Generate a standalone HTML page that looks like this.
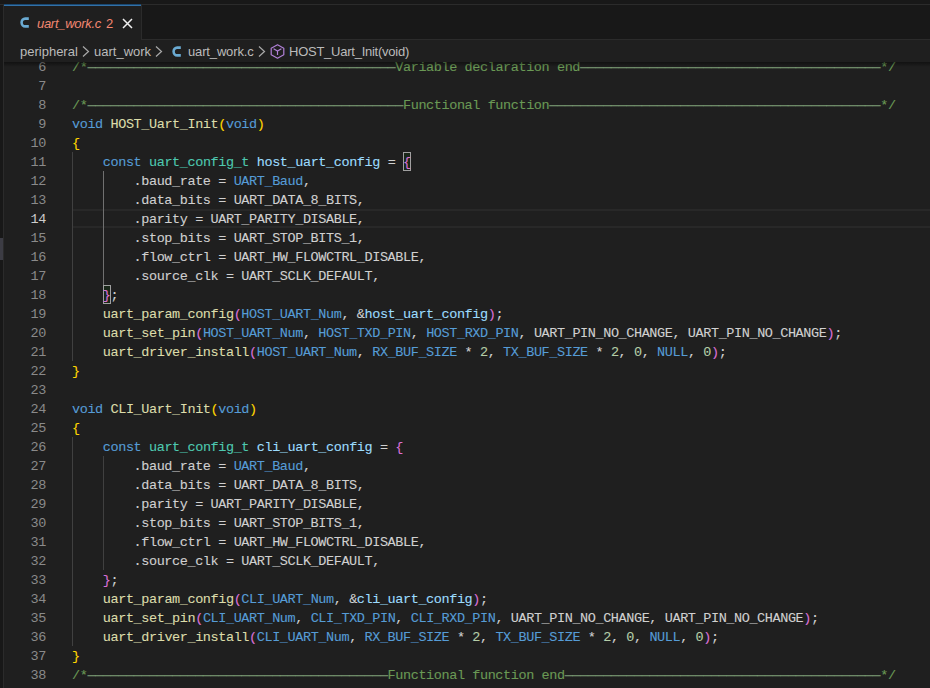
<!DOCTYPE html>
<html><head><meta charset="utf-8">
<style>
html,body{margin:0;padding:0;}
body{width:930px;height:688px;overflow:hidden;background:#181818;position:relative;font-family:"Liberation Sans",sans-serif;}
.abs{position:absolute;}
#topline{left:0;top:4px;width:930px;height:1px;background:#2B2B2B;}
#leftbar{left:0;top:5px;width:3px;height:683px;background:#181818;}
#leftborder{left:3px;top:5px;width:1px;height:683px;background:#2B2B2B;}
#slider{left:0;top:238px;width:3px;height:22px;background:#3C3C44;}
#tabbar{left:4px;top:5px;width:926px;height:34px;background:#181818;border-bottom:1px solid #2B2B2B;}
#tab{left:4px;top:4px;width:137px;height:36px;background:#1F1F1F;border-right:1px solid #2B2B2B;}
#tabtop{left:4px;top:4px;width:137px;height:2px;background:linear-gradient(#0D3355,#3F86C2);}
#editor{left:4px;top:40px;width:926px;height:648px;background:#1F1F1F;overflow:hidden;}
#crumbs{left:4px;top:40px;width:926px;height:22px;background:#1F1F1F;z-index:5;}
#shadow{left:4px;top:62px;width:926px;height:5px;z-index:4;background:linear-gradient(#00000070,#00000000);}
.ui{position:absolute;white-space:pre;font-size:13px;line-height:16px;color:#BBBBBB;}
#lines{left:0px;top:17px;width:926px;height:700px;}
.ln{position:absolute;left:68px;height:19px;line-height:19px;white-space:pre;font-family:"Liberation Mono",monospace;font-size:13.5px;letter-spacing:-0.404px;color:#D0D0D0;padding-top:1px;-webkit-text-stroke:0.1px;}
.nm{position:absolute;left:0;width:42px;text-align:right;height:19px;line-height:19px;font-family:"Liberation Mono",monospace;font-size:13.5px;letter-spacing:-0.404px;color:#8A8A8A;padding-top:1px;}
.nm.act{color:#CCCCCC;}
.k{color:#569CD6}.f{color:#DCDCAA}.t{color:#4EC9B0}.v{color:#9CDCFE}.m{color:#569CD6}.n{color:#B5CEA8}.c{color:#6A9955}
.b1{color:#FFD700}.b2{color:#DA70D6}.b3{color:#179FFF}
.hl{position:relative;top:1px;color:#7FA278;-webkit-text-stroke:0}
.bm{position:absolute;width:6px;height:17px;border:1px solid #A0A0A0;background:#00640022;}
.guide{position:absolute;width:1px;background:#404040;}
.guide.act{background:#707070;}
#curline{left:68px;top:152px;width:858px;height:15px;border-top:2px solid #282828;border-bottom:2px solid #282828;}
</style></head><body>
<div class="abs" id="tabbar"></div>
<div class="abs" id="topline"></div>
<div class="abs" id="leftbar"></div>
<div class="abs" id="leftborder"></div>
<div class="abs" id="slider"></div>
<div class="abs" id="editor">
  <div class="abs" id="lines">
    <div class="abs" id="curline"></div>
    <div class="bm" style="left:399px;top:95px"></div>
    <div class="bm" style="left:99px;top:228px"></div>
    <div class="guide" style="left:68px;top:95px;height:209px"></div>
    <div class="guide act" style="left:99px;top:114px;height:114px"></div>
    <div class="guide" style="left:68px;top:380px;height:209px"></div>
    <div class="guide" style="left:99px;top:399px;height:114px"></div>
    <div class="nm" style="top:0px">6</div>
<div class="nm" style="top:19px">7</div>
<div class="nm" style="top:38px">8</div>
<div class="nm" style="top:57px">9</div>
<div class="nm" style="top:76px">10</div>
<div class="nm" style="top:95px">11</div>
<div class="nm" style="top:114px">12</div>
<div class="nm" style="top:133px">13</div>
<div class="nm act" style="top:152px">14</div>
<div class="nm" style="top:171px">15</div>
<div class="nm" style="top:190px">16</div>
<div class="nm" style="top:209px">17</div>
<div class="nm" style="top:228px">18</div>
<div class="nm" style="top:247px">19</div>
<div class="nm" style="top:266px">20</div>
<div class="nm" style="top:285px">21</div>
<div class="nm" style="top:304px">22</div>
<div class="nm" style="top:323px">23</div>
<div class="nm" style="top:342px">24</div>
<div class="nm" style="top:361px">25</div>
<div class="nm" style="top:380px">26</div>
<div class="nm" style="top:399px">27</div>
<div class="nm" style="top:418px">28</div>
<div class="nm" style="top:437px">29</div>
<div class="nm" style="top:456px">30</div>
<div class="nm" style="top:475px">31</div>
<div class="nm" style="top:494px">32</div>
<div class="nm" style="top:513px">33</div>
<div class="nm" style="top:532px">34</div>
<div class="nm" style="top:551px">35</div>
<div class="nm" style="top:570px">36</div>
<div class="nm" style="top:589px">37</div>
<div class="nm" style="top:608px">38</div>
    <div class="ln" style="top:0px"><span class="c">/*<span class="hl">────────────────────────────────────────</span>Variable declaration end<span class="hl">───────────────────────────────────────</span>*/</span></div>
<div class="ln" style="top:19px"></div>
<div class="ln" style="top:38px"><span class="c">/*<span class="hl">─────────────────────────────────────────</span>Functional function<span class="hl">───────────────────────────────────────────</span>*/</span></div>
<div class="ln" style="top:57px"><span class="k">void</span> <span class="f">HOST_Uart_Init</span><span class="b1">(</span><span class="k">void</span><span class="b1">)</span></div>
<div class="ln" style="top:76px"><span class="b1">{</span></div>
<div class="ln" style="top:95px">    <span class="k">const</span> <span class="t">uart_config_t</span> <span class="v">host_uart_config</span> = <span class="b2">{</span></div>
<div class="ln" style="top:114px">        .baud_rate = <span class="m">UART_Baud</span>,</div>
<div class="ln" style="top:133px">        .data_bits = UART_DATA_8_BITS,</div>
<div class="ln" style="top:152px">        .parity = UART_PARITY_DISABLE,</div>
<div class="ln" style="top:171px">        .stop_bits = UART_STOP_BITS_1,</div>
<div class="ln" style="top:190px">        .flow_ctrl = UART_HW_FLOWCTRL_DISABLE,</div>
<div class="ln" style="top:209px">        .source_clk = UART_SCLK_DEFAULT,</div>
<div class="ln" style="top:228px">    <span class="b2">}</span>;</div>
<div class="ln" style="top:247px">    <span class="f">uart_param_config</span><span class="b2">(</span><span class="m">HOST_UART_Num</span>, &amp;<span class="v">host_uart_config</span><span class="b2">)</span>;</div>
<div class="ln" style="top:266px">    <span class="f">uart_set_pin</span><span class="b2">(</span><span class="m">HOST_UART_Num</span>, <span class="m">HOST_TXD_PIN</span>, <span class="m">HOST_RXD_PIN</span>, UART_PIN_NO_CHANGE, UART_PIN_NO_CHANGE<span class="b2">)</span>;</div>
<div class="ln" style="top:285px">    <span class="f">uart_driver_install</span><span class="b2">(</span><span class="m">HOST_UART_Num</span>, <span class="m">RX_BUF_SIZE</span> * <span class="n">2</span>, <span class="m">TX_BUF_SIZE</span> * <span class="n">2</span>, <span class="n">0</span>, <span class="m">NULL</span>, <span class="n">0</span><span class="b2">)</span>;</div>
<div class="ln" style="top:304px"><span class="b1">}</span></div>
<div class="ln" style="top:323px"></div>
<div class="ln" style="top:342px"><span class="k">void</span> <span class="f">CLI_Uart_Init</span><span class="b1">(</span><span class="k">void</span><span class="b1">)</span></div>
<div class="ln" style="top:361px"><span class="b1">{</span></div>
<div class="ln" style="top:380px">    <span class="k">const</span> <span class="t">uart_config_t</span> <span class="v">cli_uart_config</span> = <span class="b2">{</span></div>
<div class="ln" style="top:399px">        .baud_rate = <span class="m">UART_Baud</span>,</div>
<div class="ln" style="top:418px">        .data_bits = UART_DATA_8_BITS,</div>
<div class="ln" style="top:437px">        .parity = UART_PARITY_DISABLE,</div>
<div class="ln" style="top:456px">        .stop_bits = UART_STOP_BITS_1,</div>
<div class="ln" style="top:475px">        .flow_ctrl = UART_HW_FLOWCTRL_DISABLE,</div>
<div class="ln" style="top:494px">        .source_clk = UART_SCLK_DEFAULT,</div>
<div class="ln" style="top:513px">    <span class="b2">}</span>;</div>
<div class="ln" style="top:532px">    <span class="f">uart_param_config</span><span class="b2">(</span><span class="m">CLI_UART_Num</span>, &amp;<span class="v">cli_uart_config</span><span class="b2">)</span>;</div>
<div class="ln" style="top:551px">    <span class="f">uart_set_pin</span><span class="b2">(</span><span class="m">CLI_UART_Num</span>, <span class="m">CLI_TXD_PIN</span>, <span class="m">CLI_RXD_PIN</span>, UART_PIN_NO_CHANGE, UART_PIN_NO_CHANGE<span class="b2">)</span>;</div>
<div class="ln" style="top:570px">    <span class="f">uart_driver_install</span><span class="b2">(</span><span class="m">CLI_UART_Num</span>, <span class="m">RX_BUF_SIZE</span> * <span class="n">2</span>, <span class="m">TX_BUF_SIZE</span> * <span class="n">2</span>, <span class="n">0</span>, <span class="m">NULL</span>, <span class="n">0</span><span class="b2">)</span>;</div>
<div class="ln" style="top:589px"><span class="b1">}</span></div>
<div class="ln" style="top:608px"><span class="c">/*<span class="hl">───────────────────────────────────────</span>Functional function end<span class="hl">─────────────────────────────────────────</span>*/</span></div>
  </div>
</div>
<div class="abs" id="tab"></div>
<div class="abs" id="tabtop"></div>
<svg class="abs" style="left:19.6px;top:16.5px" width="10" height="11" viewBox="0 0 10 11"><path d="M8.8 1.6H5.2A3.6 3.9 0 0 0 5.2 9.4H8.8" fill="none" stroke="#6AAAD2" stroke-width="2.6"/></svg>
<div class="ui" style="left:37px;top:16px;color:#F48771;font-style:italic;letter-spacing:-0.3px">uart_work.c</div>
<div class="ui" style="left:106px;top:16px;color:#F48771">2</div>
<svg class="abs" style="left:122px;top:18px" width="11" height="11" viewBox="0 0 11 11"><path d="M1 1L10 10M10 1L1 10" stroke="#F0F0F0" stroke-width="1.5"/></svg>
<div class="abs" id="crumbs">
  <div class="ui" style="left:16px;top:4px">peripheral</div>
  <svg class="abs" style="left:78px;top:6px" width="8" height="11" viewBox="0 0 8 11"><path d="M1 0.5L6.5 5.5L1 10.5" fill="none" stroke="#A9A9A9" stroke-width="1.2"/></svg>
  <div class="ui" style="left:90px;top:4px">uart_work</div>
  <svg class="abs" style="left:151px;top:6px" width="8" height="11" viewBox="0 0 8 11"><path d="M1 0.5L6.5 5.5L1 10.5" fill="none" stroke="#A9A9A9" stroke-width="1.2"/></svg>
  <svg class="abs" style="left:168px;top:5.5px" width="10" height="11" viewBox="0 0 10 11"><path d="M8.8 1.6H5.2A3.6 3.9 0 0 0 5.2 9.4H8.8" fill="none" stroke="#6AAAD2" stroke-width="2.6"/></svg>
  <div class="ui" style="left:184px;top:4px;letter-spacing:-0.15px">uart_work.c</div>
  <svg class="abs" style="left:254px;top:6px" width="8" height="11" viewBox="0 0 8 11"><path d="M1 0.5L6.5 5.5L1 10.5" fill="none" stroke="#A9A9A9" stroke-width="1.2"/></svg>
  <svg class="abs" style="left:266px;top:4px" width="15" height="15" viewBox="0 0 15 15"><path d="M7.5 0.8L13.8 4.2V10.8L7.5 14.2L1.2 10.8V4.2Z" fill="none" stroke="#B180D7" stroke-width="1.2" stroke-linejoin="round"/><path d="M3.6 4.8L7.5 7L11.4 4.8M7.5 7V11" fill="none" stroke="#B180D7" stroke-width="1.2"/></svg>
  <div class="ui" style="left:285px;top:4px;letter-spacing:-0.25px">HOST_Uart_Init(void)</div>
</div>
<div class="abs" id="shadow"></div>
</body></html>
